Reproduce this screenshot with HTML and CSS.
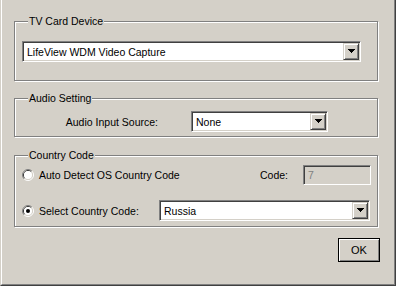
FILE: index.html
```html
<!DOCTYPE html>
<html lang="en">
<head>
  <meta charset="UTF-8" />
  <title>TV Settings</title>
  <link rel="stylesheet" href="styles.css">
</head>
<body>
  <div class="window">
    <div class="client">
      <fieldset class="group group-tv">
        <legend>TV Card Device</legend>
        <div class="combo combo-tv">
          <span class="combo-text">LifeView WDM Video Capture</span>
          <span class="combo-btn"><svg width="7" height="4" viewBox="0 0 7 4"><path d="M0 0h7v1h-1v1h-1v1h-1v1h-1v-1h-1v-1h-1v-1h-1z" fill="#000"/></svg></span>
        </div>
      </fieldset>

      <fieldset class="group group-audio">
        <legend>Audio Setting</legend>
        <div class="row">
          <span class="field-label">Audio Input Source:</span>
          <div class="combo combo-audio">
            <span class="combo-text">None</span>
            <span class="combo-btn"><svg width="7" height="4" viewBox="0 0 7 4"><path d="M0 0h7v1h-1v1h-1v1h-1v1h-1v-1h-1v-1h-1v-1h-1z" fill="#000"/></svg></span>
          </div>
        </div>
      </fieldset>

      <fieldset class="group group-country">
        <legend>Country Code</legend>
        <div class="row row-auto">
          <label class="radio">
            <svg class="radio-dot" width="12" height="12" viewBox="0 0 12 12">
              <path d="M2.11 9.89A5.5 5.5 0 0 1 9.89 2.11" stroke="#808080" fill="none"/>
              <path d="M9.89 2.11A5.5 5.5 0 0 1 2.11 9.89" stroke="#fff" fill="none"/>
              <path d="M2.82 9.18A4.5 4.5 0 0 1 9.18 2.82" stroke="#404040" fill="none"/>
              <path d="M9.18 2.82A4.5 4.5 0 0 1 2.82 9.18" stroke="#d4d0c8" fill="none"/>
              <circle cx="6" cy="6" r="4" fill="#fff"/>
            </svg>
            Auto Detect OS Country Code
          </label>
          <span class="code-label">Code:</span>
          <div class="textbox is-disabled">7</div>
        </div>
        <div class="row row-select">
          <label class="radio">
            <svg class="radio-dot" width="12" height="12" viewBox="0 0 12 12">
              <path d="M2.11 9.89A5.5 5.5 0 0 1 9.89 2.11" stroke="#808080" fill="none"/>
              <path d="M9.89 2.11A5.5 5.5 0 0 1 2.11 9.89" stroke="#fff" fill="none"/>
              <path d="M2.82 9.18A4.5 4.5 0 0 1 9.18 2.82" stroke="#404040" fill="none"/>
              <path d="M9.18 2.82A4.5 4.5 0 0 1 2.82 9.18" stroke="#d4d0c8" fill="none"/>
              <circle cx="6" cy="6" r="4" fill="#fff"/>
              <circle cx="6" cy="6" r="2" fill="#000"/>
            </svg>
            Select Country Code:
          </label>
          <div class="combo combo-country">
            <span class="combo-text">Russia</span>
            <span class="combo-btn"><svg width="7" height="4" viewBox="0 0 7 4"><path d="M0 0h7v1h-1v1h-1v1h-1v1h-1v-1h-1v-1h-1v-1h-1z" fill="#000"/></svg></span>
          </div>
        </div>
      </fieldset>

      <div class="actions">
        <button class="btn btn-default">OK</button>
      </div>
    </div>
  </div>
</body>
</html>
```

FILE: styles.css
```css
* {
  box-sizing: border-box;
}

html, body {
  margin: 0;
  padding: 0;
  background: #d4d0c8;
  font-family: "Liberation Sans", Arial, sans-serif;
  font-size: 10.5px;
  color: #000;
}

.window {
  width: 396px;
  height: 286px;
  display: flex;
  border-left: 1px solid #d4d0c8;
  border-right: 1px solid #404040;
  border-bottom: 1px solid #404040;
}

.client {
  flex: 1;
  display: flex;
  flex-direction: column;
  padding: 0 0 0 12px;
  border-left: 1px solid #fff;
  border-right: 1px solid #808080;
  border-bottom: 1px solid #808080;
}

/* etched group boxes */
.group {
  width: 364px;
  min-width: 0;
  margin: 0;
  padding: 0 6px 0 7px;
  border: 1px solid #808080;
  box-shadow: 1px 1px 0 #fff, inset 1px 1px 0 #fff;
}

.group legend {
  margin-left: 6px;
  padding: 0 1px;
  line-height: 13px;
  background: #d4d0c8;
}

.group-tv {
  margin-top: 15px;
  height: 66px;
  padding-top: 13px;
}

.group-audio {
  margin-top: 11px;
  height: 45px;
  padding-top: 6px;
}

.group-country {
  margin-top: 12px;
  height: 78px;
  padding-top: 3px;
}

.row {
  display: flex;
  align-items: center;
}

/* combo boxes */
.combo {
  display: flex;
  align-items: center;
  height: 21px;
  background: #fff;
  border: 1px solid;
  border-color: #808080 #fff #fff #808080;
  box-shadow: inset 1px 1px 0 #404040, inset -1px -1px 0 #d4d0c8;
  padding: 1px;
}

.combo-text {
  flex: 1;
  padding-left: 3px;
  white-space: nowrap;
}

.combo-btn {
  width: 16px;
  height: 17px;
  display: flex;
  align-items: center;
  justify-content: center;
  padding-bottom: 1px;
  background: #d4d0c8;
  border: 1px solid;
  border-color: #d4d0c8 #404040 #404040 #d4d0c8;
  box-shadow: inset 1px 1px 0 #fff, inset -1px -1px 0 #808080;
}

.combo-tv {
  width: 339px;
}

.field-label {
  width: 136px;
  text-align: right;
}

.combo-audio {
  width: 137px;
  margin-left: 33px;
}

/* radios */
.radio {
  display: flex;
  align-items: center;
  gap: 5px;
  white-space: nowrap;
}

.row-auto {
  height: 20px;
}

.row-select {
  margin-top: 15px;
}

.row-select .radio {
  width: 137px;
}

.code-label {
  margin-left: auto;
  width: 43px;
}

.textbox {
  width: 68px;
  height: 20px;
  padding: 3px 0 0 4px;
  border: 1px solid;
  border-color: #808080 #fff #fff #808080;
  box-shadow: inset 1px 1px 0 #404040, inset -1px -1px 0 #d4d0c8;
  background: #fff;
}

.textbox.is-disabled {
  background: #d4d0c8;
  color: #808080;
}

.combo-country {
  width: 211px;
}

.actions {
  display: flex;
  justify-content: flex-end;
  margin-top: 11px;
  padding-right: 14px;
}

.btn {
  width: 42px;
  height: 24px;
  padding: 0;
  font-family: inherit;
  font-size: 11px;
  color: #000;
  background: #d4d0c8;
  border: 1px solid #000;
  box-shadow: inset 1px 1px 0 #fff, inset -1px -1px 0 #808080;
  border-radius: 0;
}
```
